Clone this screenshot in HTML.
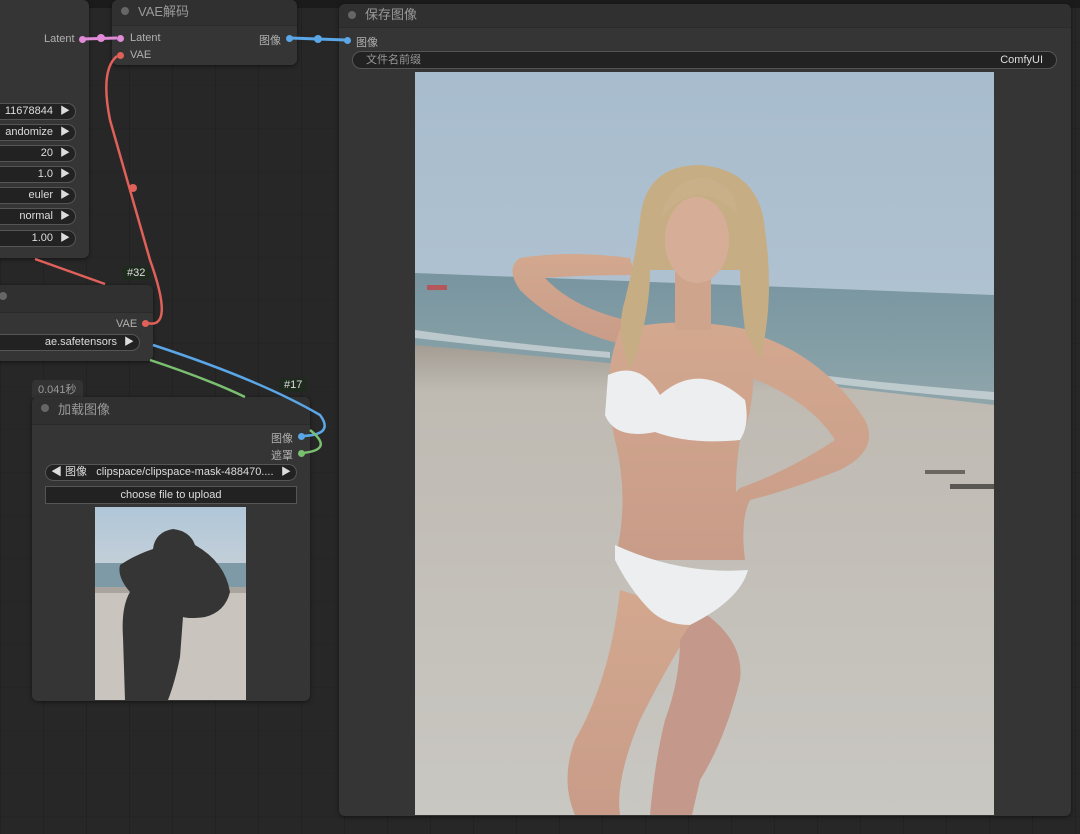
<!DOCTYPE html>
<html><head><meta charset="utf-8">
<style>
*{margin:0;padding:0;box-sizing:border-box}
body{width:1080px;height:834px;overflow:hidden;background:#272727;font-family:"Liberation Sans","Noto Sans CJK SC",sans-serif;position:relative;
background-image:linear-gradient(90deg,rgba(0,0,0,.12) 1px,transparent 1px),linear-gradient(0deg,rgba(0,0,0,.05) 1px,transparent 1px);background-size:43px 100%,100% 43px}
.top{position:absolute;left:0;top:0;width:1080px;height:8px;background:#1b1b1b}
.node{position:absolute;background:#353535;border-radius:6px;box-shadow:0 1px 4px rgba(0,0,0,.5)}
.title{position:absolute;left:0;right:0;top:0;height:22px;background:#303030;border-bottom:1px solid #2a2a2a;color:#9a9a9a;font-size:13px;padding-left:26px;line-height:22px;border-radius:6px 6px 0 0}
.title:before{content:"";position:absolute;left:9px;top:7px;width:8px;height:8px;border-radius:50%;background:#666}
.lbl{position:absolute;font-size:11px;color:#b0b0b0}
.dot{position:absolute;width:7px;height:7px;border-radius:50%}
.w{position:absolute;height:17px;background:#222;border:1px solid #555;border-radius:9px;color:#ddd;font-size:11px;line-height:15px;text-align:right;padding-right:22px}
.w:after{content:"▶";position:absolute;right:5px;top:0;font-size:10px;color:#ddd}
.badge{position:absolute;font-size:11px;color:#ddd;background:#1f2a1f;padding:1px 5px;border-radius:3px}
</style></head><body>
<div class="top"></div>

<div class="node" style="left:-10px;top:0;width:99px;height:258px"></div>
<div class="lbl" style="left:44px;top:33px">Latent</div>
<div class="dot" style="left:79px;top:36px;background:#e08ad8"></div>
<div class="w" style="left:-10px;top:103px;width:86px">11678844</div>
<div class="w" style="left:-10px;top:124px;width:86px">andomize</div>
<div class="w" style="left:-10px;top:145px;width:86px">20</div>
<div class="w" style="left:-10px;top:166px;width:86px">1.0</div>
<div class="w" style="left:-10px;top:187px;width:86px">euler</div>
<div class="w" style="left:-10px;top:208px;width:86px">normal</div>
<div class="w" style="left:-10px;top:230px;width:86px">1.00</div>

<div class="node" style="left:112px;top:0;width:185px;height:65px"><div class="title" style="top:0;height:26px;line-height:24px">VAE解码</div></div>
<div class="dot" style="left:117px;top:35px;background:#e08ad8"></div>
<div class="lbl" style="left:130px;top:32px">Latent</div>
<div class="dot" style="left:117px;top:52px;background:#e0605a"></div>
<div class="lbl" style="left:130px;top:49px">VAE</div>
<div class="lbl" style="left:259px;top:32px">图像</div>
<div class="dot" style="left:286px;top:35px;background:#5aa6e6"></div>

<div class="badge" style="left:122px;top:266px">#32</div>
<div class="node" style="left:-10px;top:285px;width:163px;height:76px"><div class="title" style="height:28px"></div></div>
<div class="lbl" style="left:116px;top:318px">VAE</div>
<div class="dot" style="left:142px;top:320px;background:#e0605a"></div>
<div class="w" style="left:-10px;top:334px;width:150px">ae.safetensors</div>

<div class="badge" style="left:32px;top:380px;background:#333;color:#999;border-radius:4px 4px 0 0;padding:1px 6px">0.041秒</div>
<div class="badge" style="left:279px;top:378px">#17</div>
<div class="node" style="left:32px;top:397px;width:278px;height:304px"><div class="title" style="height:28px;line-height:26px;font-size:13px">加载图像</div></div>
<div class="lbl" style="left:271px;top:430px">图像</div>
<div class="dot" style="left:298px;top:433px;background:#5aa6e6"></div>
<div class="lbl" style="left:271px;top:447px">遮罩</div>
<div class="dot" style="left:298px;top:450px;background:#7ac070"></div>
<div class="w" style="left:45px;top:464px;width:252px;text-align:left;padding-left:5px">◀ 图像 &nbsp; clipspace/clipspace-mask-488470....</div>
<div style="position:absolute;left:45px;top:486px;width:252px;height:18px;background:#222;border:1px solid #555;color:#ddd;font-size:11px;text-align:center;line-height:16px">choose file to upload</div>
<svg style="position:absolute;left:95px;top:507px" width="151" height="193">
<defs><linearGradient id="s2" x1="0" y1="0" x2="0" y2="1"><stop offset="0" stop-color="#b0c6d8"/><stop offset="1" stop-color="#c2cfd8"/></linearGradient></defs>
<rect width="151" height="193" fill="#c9c5be"/>
<rect width="151" height="56" fill="url(#s2)"/>
<rect y="56" width="151" height="26" fill="#7e9aa6"/>
<rect y="80" width="151" height="6" fill="#a9a59e"/>
<path d="M30 193 L28 130 Q26 100 35 85 Q22 70 25 58 Q40 48 58 42 Q60 25 78 22 Q95 24 100 38 Q130 55 135 85 Q130 105 110 110 Q95 112 88 110 L85 150 Q80 175 73 193Z" fill="#353535"/>
</svg>

<div class="node" style="left:339px;top:4px;width:732px;height:812px"><div class="title" style="height:24px;line-height:22px">保存图像</div></div>
<div class="dot" style="left:344px;top:37px;background:#5aa6e6"></div>
<div class="lbl" style="left:356px;top:34px">图像</div>
<div style="position:absolute;left:352px;top:51px;width:705px;height:18px;background:#222;border:1px solid #555;border-radius:9px;font-size:11px;color:#999;line-height:16px;padding-left:13px">文件名前缀<span style="position:absolute;right:13px;color:#ddd">ComfyUI</span></div>

<svg style="position:absolute;left:415px;top:72px" width="579" height="743" viewBox="415 72 579 743">
<defs>
<linearGradient id="sky" x1="0" y1="0" x2="0" y2="1"><stop offset="0" stop-color="#a7bccd"/><stop offset="1" stop-color="#c3cfd7"/></linearGradient>
<linearGradient id="sea" x1="0" y1="0" x2="0" y2="1"><stop offset="0" stop-color="#7895a0"/><stop offset="1" stop-color="#8fa6ab"/></linearGradient>
<linearGradient id="sand" x1="0" y1="0" x2="0" y2="1"><stop offset="0" stop-color="#a39d94"/><stop offset=".1" stop-color="#bfbab2"/><stop offset="1" stop-color="#c9c7c2"/></linearGradient>
<linearGradient id="skin" x1="0" y1="0" x2="0" y2="1"><stop offset="0" stop-color="#d3a88f"/><stop offset="1" stop-color="#c89c88"/></linearGradient>
</defs>
<rect x="415" y="72" width="579" height="743" fill="url(#sky)"/>
<path d="M415 273 L994 295 L994 410 L415 350Z" fill="url(#sea)"/>
<path d="M415 330 Q520 345 610 352 L610 358 Q520 350 415 338Z" fill="#d4dcdd" opacity=".7"/>
<path d="M820 375 Q900 385 994 392 L994 400 Q900 392 820 382Z" fill="#d4dcdd" opacity=".7"/>
<path d="M415 345 Q700 370 994 405 L994 815 L415 815Z" fill="url(#sand)"/>
<rect x="427" y="285" width="20" height="5" fill="#b5565a"/>
<path d="M625 345 Q560 330 520 290 Q505 268 520 258 Q570 250 630 258 L635 275 Q580 275 545 278 Q575 310 635 322Z" fill="url(#skin)"/>
<path d="M740 330 Q820 350 865 420 Q880 450 840 470 Q790 490 750 500 Q740 520 745 560 L730 545 Q725 500 740 488 Q790 470 835 440 Q810 400 745 375Z" fill="url(#skin)"/>
<path d="M620 590 Q610 680 575 740 Q560 780 575 815 L620 815 Q615 780 640 720 Q670 660 700 615Z" fill="url(#skin)"/>
<path d="M700 610 Q745 640 740 680 Q725 740 700 780 L692 815 L650 815 Q655 760 665 720 Q680 680 680 640Z" fill="#c4988a"/>
<path d="M620 330 Q680 315 750 330 Q760 400 740 440 Q730 500 745 560 L615 560 Q630 500 615 440 Q600 380 620 330Z" fill="url(#skin)"/>
<path d="M608 375 Q640 360 660 395 Q700 360 745 400 Q750 425 740 440 Q690 445 655 432 Q615 440 605 415Z" fill="#eceef0"/>
<path d="M615 545 Q680 575 748 570 Q740 600 690 625 Q665 625 650 610 Q630 590 615 560Z" fill="#eceef0"/>
<rect x="675" y="270" width="36" height="60" fill="#cfa48d"/>
<path d="M640 220 Q645 165 700 165 Q760 170 765 230 Q775 300 760 360 L745 330 Q740 290 740 270 L650 270 Q650 320 630 370 Q615 330 625 300 Q635 260 640 220Z" fill="#c7ad84"/>
<ellipse cx="697" cy="240" rx="32" ry="43" fill="#d6ae98"/>
<path d="M660 220 Q670 180 700 178 Q735 180 738 215 Q720 195 697 195 Q675 198 660 220Z" fill="#c9b088"/>
<rect x="925" y="470" width="40" height="4" fill="#6a6660"/>
<rect x="950" y="484" width="44" height="5" fill="#5a5752"/>
</svg>

<svg style="position:absolute;left:0;top:0" width="1080" height="834">
<path d="M82 39 L117 38" stroke="#e08ad8" stroke-width="3" fill="none"/>
<circle cx="101" cy="38" r="4" fill="#e08ad8"/>
<path d="M290 38 L346 40" stroke="#5aa6e6" stroke-width="3" fill="none"/>
<circle cx="318" cy="39" r="4" fill="#5aa6e6"/>
<path d="M117 56 Q100 70 110 120 Q130 190 150 260 Q175 330 147 323" stroke="#e0605a" stroke-width="2.5" fill="none"/>
<circle cx="133" cy="188" r="4" fill="#e0605a"/>
<path d="M35 259 L105 284" stroke="#e0605a" stroke-width="2.5" fill="none"/>
<path d="M153 345 Q260 380 320 415 Q335 435 302 436" stroke="#5aa6e6" stroke-width="2.5" fill="none"/>
<path d="M150 360 Q210 380 245 397" stroke="#7ac070" stroke-width="2.5" fill="none"/>
<path d="M310 430 Q335 450 302 453" stroke="#7ac070" stroke-width="2.5" fill="none"/>
</svg>
</body></html>
